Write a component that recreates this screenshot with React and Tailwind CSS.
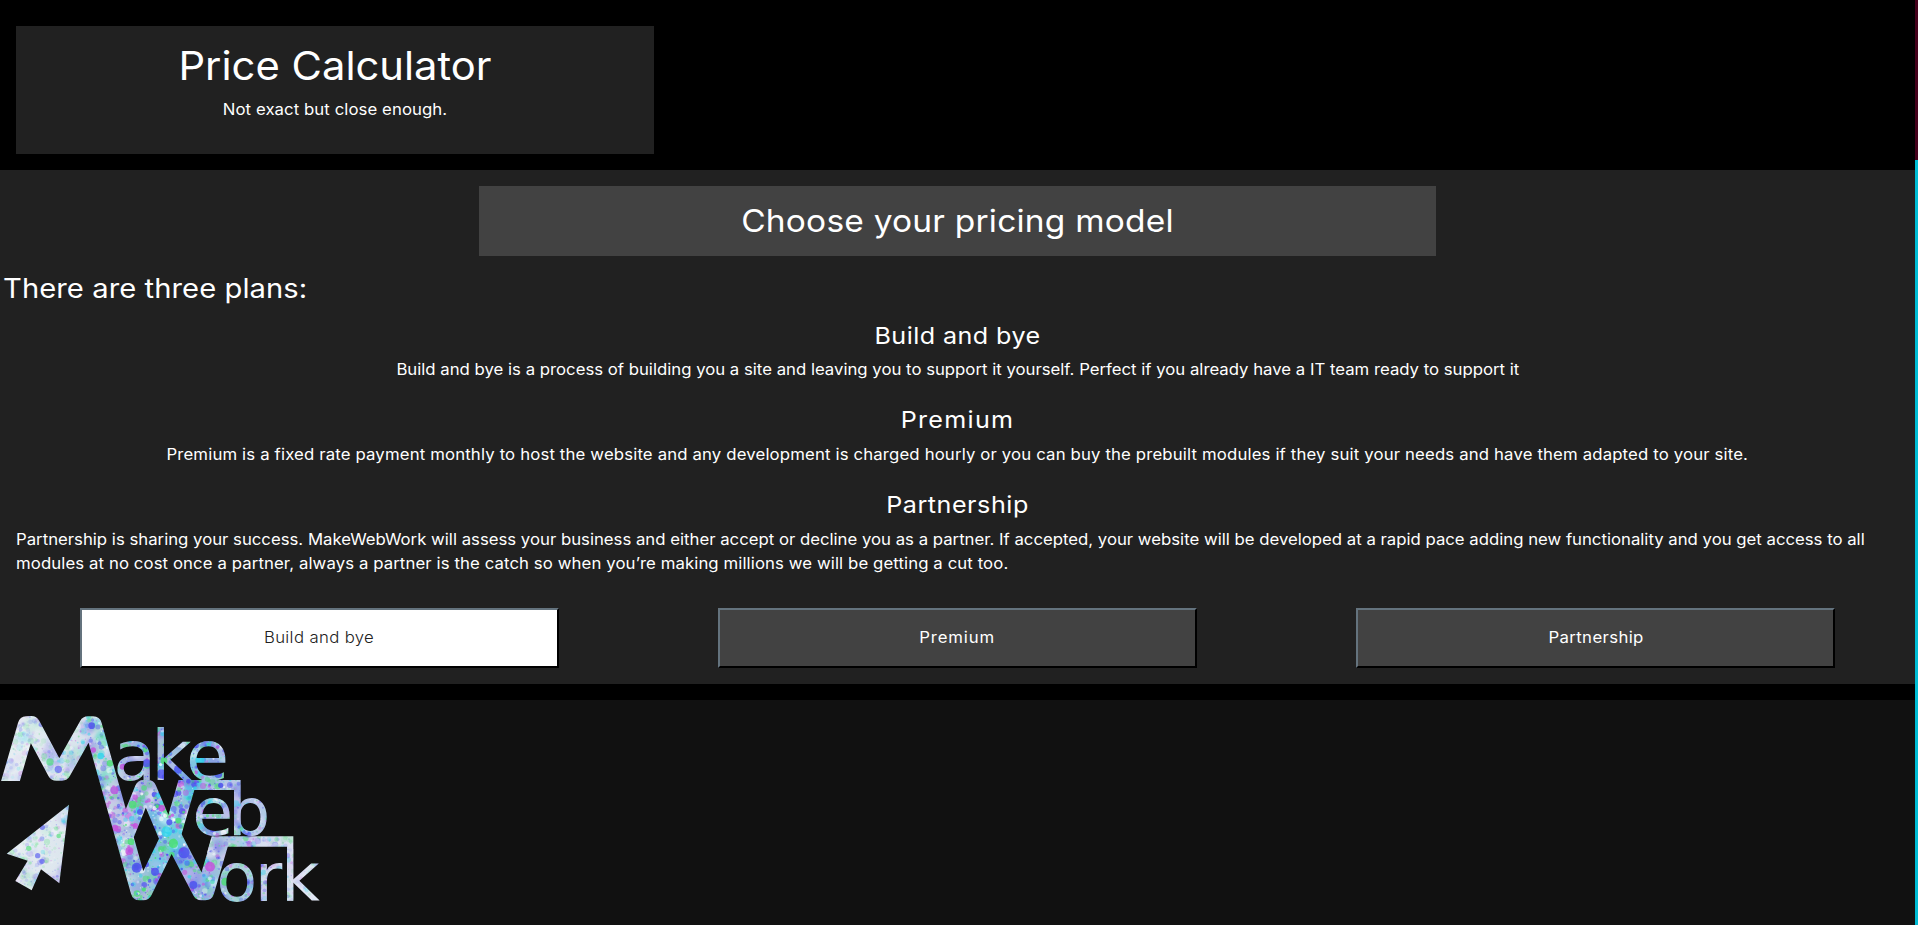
const PLANS = [
  {
    name: "Build and bye",
    heading: "tracking-[0.4px]",
    align: "items-center",
    lines: [
      {
        text: "Build and bye is a process of building you a site and leaving you to support it yourself. Perfect if you already have a IT team ready to support it",
        style: "origin-center tracking-normal",
      },
    ],
    button: "tracking-[0.33px]",
  },
  {
    name: "Premium",
    heading: "tracking-[1.2px]",
    align: "items-center",
    lines: [
      {
        text: "Premium is a fixed rate payment monthly to host the website and any development is charged hourly or you can buy the prebuilt modules if they suit your needs and have them adapted to your site.",
        style: "origin-center tracking-[0.142px]",
      },
    ],
    button: "tracking-[0.8px]",
  },
  {
    name: "Partnership",
    heading: "tracking-[0.5px]",
    align: "items-start",
    lines: [
      {
        text: "Partnership is sharing your success. MakeWebWork will assess your business and either accept or decline you as a partner. If accepted, your website will be developed at a rapid pace adding new functionality and you get access to all",
        style: "origin-left tracking-normal",
      },
      {
        text: "modules at no cost once a partner, always a partner is the catch so when you’re making millions we will be getting a cut too.",
        style: "origin-left tracking-[0.093px]",
      },
    ],
    button: "tracking-[0.35px]",
  },
];

const MAGENTA = "#c64fdc";
const GREEN = "#48e070";
const BLUE = "#4a4cf0";
const CYAN = "#2fd6ec";

// Large paint drops, as [x, y, radius, colour]
const DROPS = [
  [343, 271, 12, MAGENTA], [345, 384, 10, MAGENTA], [388, 453, 12, MAGENTA],
  [175, 208, 11, BLUE], [150, 186, 11, GREEN], [275, 77, 10, BLUE],
  [398, 314, 12, GREEN], [280, 150, 8, MAGENTA], [113, 467, 8, BLUE],
  [127, 382, 8, BLUE], [86, 445, 8, GREEN], [176, 408, 7, GREEN],
  [393, 425, 10, GREEN], [552, 458, 17, BLUE], [662, 256, 8, BLUE],
  [410, 503, 15, BLUE], [630, 500, 15, MAGENTA], [485, 325, 10, MAGENTA],
  [508, 367, 9, BLUE], [580, 555, 12, BLUE], [330, 190, 10, GREEN],
  [302, 168, 10, CYAN], [126, 484, 8, BLUE], [465, 515, 12, BLUE],
  [492, 182, 10, GREEN], [535, 208, 13, BLUE], [484, 222, 14, BLUE],
  [600, 180, 14, CYAN], [655, 222, 12, BLUE], [676, 545, 12, GREEN],
  [520, 430, 14, GREEN], [440, 190, 12, BLUE], [535, 362, 9, GREEN],
  [420, 336, 9, BLUE], [500, 395, 16, CYAN], [368, 200, 9, MAGENTA],
];

// Soft tints below the drops
const TINTS = [
  [500, 400, 90, CYAN, 0.35], [440, 300, 70, "#8f7fe6", 0.35], [600, 200, 70, CYAN, 0.35],
  [400, 160, 60, "#8f8fe8", 0.45], [620, 330, 60, "#5fd8c8", 0.4], [590, 540, 70, "#7686ee", 0.3],
  [420, 470, 70, "#70c8e0", 0.35], [760, 340, 60, "#8fa8ec", 0.35], [700, 540, 60, "#7fe0c0", 0.35],
];

function scatter(seed, count, colours, radius) {
  let state = seed;
  const next = () => {
    state = (state * 16807) % 2147483647;
    return state / 2147483647;
  };
  return Array.from({ length: count }, () => {
    const x = next() * 980;
    const y = 40 + next() * 570;
    const r = radius(next());
    const colour = colours[Math.floor(next() * colours.length)];
    const strength = Math.max(0.25, 0.9 - Math.abs(x - 500) / 600);
    return [x, y, r, colour, strength * (0.3 + next() * 0.7)];
  });
}

const CLOUDS = scatter(911, 500, [CYAN, "#ffffff", "#8f7fe6", "#6fe0a8", "#d9b8f4", "#5f6fe8"], (n) => 10 + n * 16);
const SPECKLES = scatter(4127, 5000, [MAGENTA, GREEN, BLUE, CYAN, BLUE, GREEN, "#ffffff"], (n) => 2 + n ** 3 * 8);

function Drops({ items }) {
  return items.map(([x, y, r, colour, opacity], i) => (
    <circle key={i} cx={x} cy={y} r={r} fill={colour} opacity={opacity} />
  ));
}

function Logo() {
  return (
    <svg className="block h-[225px] w-[340px]" viewBox="0 0 1020 675" role="img" aria-label="Make Web Work">
      <defs>
        <linearGradient id="base" x1="0" x2="1" y1="0" y2="0">
          <stop offset="0" stopColor="#eaf0f3" />
          <stop offset="0.25" stopColor="#d7e2ec" />
          <stop offset="0.42" stopColor="#aac0d8" />
          <stop offset="0.62" stopColor="#a8bfde" />
          <stop offset="0.85" stopColor="#dadff0" />
          <stop offset="1" stopColor="#eef0fa" />
        </linearGradient>
        <filter id="soft" x="-50%" y="-50%" width="200%" height="200%">
          <feGaussianBlur stdDeviation="22" />
        </filter>
        <filter id="cloud">
          <feGaussianBlur stdDeviation="5" />
        </filter>
        <pattern id="paint" patternUnits="userSpaceOnUse" width="1020" height="675">
          <rect width="1020" height="675" fill="url(#base)" />
          <g filter="url(#soft)">
            <Drops items={TINTS} />
          </g>
          <g filter="url(#cloud)" opacity="0.75">
            <Drops items={CLOUDS} />
          </g>
          <Drops items={SPECKLES} />
          <Drops items={DROPS.map(([x, y, r, c]) => [x, y, r, c, x < 260 ? 0.6 : 0.8])} />
        </pattern>
        <clipPath id="trim">
          <path d="M0 0H420V240H1020V675H230V243H0Z" />
        </clipPath>
      </defs>
      <g clipPath="url(#trim)" fill="none" stroke="url(#paint)" strokeWidth="54" strokeLinejoin="round">
        <path d="M23 272 80 76 94 75 169 215 186 215 264 76 279 76 419 574 430 574 514 402 604 574 616 574 660 424" />
        <path d="M372 412 431 267 443 267 510 425 568 225" />
      </g>
      <g fill="url(#paint)">
        <path d="M540 240H722V405H703V270H560Z" />
        <path d="M635 409H880V602H861V440H682L650 460 621 458Z" />
        <path d="M207 314 20 461 83 482 46 543 95 571 123 508 178 550Z" />
        <g fontFamily="'DejaVu Sans', sans-serif">
          <text x="340 454 558" y="240" fontSize="210">ake</text>
          <text x="577 684" y="405" fontSize="200">eb</text>
          <text x="649 764 843" y="602" fontSize="201">ork</text>
        </g>
      </g>
    </svg>
  );
}

export default function App() {
  return (
    <div className="flex h-[925px] w-full overflow-hidden bg-black font-['Inter',sans-serif] text-[15.5px] leading-6 text-white">
      <main className="flex min-w-0 flex-1 flex-col">
        <header className="px-4 pt-[26px] pb-4">
          <div className="w-[638px] bg-[#212121] p-4 text-center">
            <h1 className="mb-2 scale-x-107 text-[39px] leading-[48px]">Price Calculator</h1>
            <p className="mb-4 scale-x-108 tracking-[0.07px]">Not exact but close enough.</p>
          </div>
        </header>

        <section className="h-[514px] bg-[#212121] pt-4">
          <div className="mx-auto w-[957px] bg-[#424242] p-4 text-center">
            <h2 className="scale-x-108 text-[31px] leading-[38px] tracking-[0.2px]">Choose your pricing model</h2>
          </div>
          <h3 className="mt-4 mb-2 ml-[3px] w-fit origin-left scale-x-108 text-[27px] leading-[33.6px] tracking-[0.07px]">
            There are three plans:
          </h3>
          {PLANS.map((plan) => (
            <article key={plan.name} className="px-4 pt-2 pb-4">
              <h4 className={`mb-2 scale-x-108 text-center text-[23.25px] leading-[28.8px] ${plan.heading}`}>
                {plan.name}
              </h4>
              <p className={`flex flex-col whitespace-nowrap ${plan.align}`}>
                {plan.lines.map((line) => (
                  <span key={line.text} className={`scale-x-108 ${line.style}`}>
                    {line.text}
                  </span>
                ))}
              </p>
            </article>
          ))}
          <div className="grid grid-cols-3 justify-items-center pt-4">
            {PLANS.map((plan, i) => (
              <button
                key={plan.name}
                className={`h-[60px] w-3/4 border-2 border-t-[#64737e] border-r-black border-b-black border-l-[#64737e] ${plan.button} ${
                  i === 0 ? "bg-white font-light text-[#212121]" : "bg-[#424242] text-white"
                }`}
              >
                <span className="inline-block scale-x-108">{plan.name}</span>
              </button>
            ))}
          </div>
        </section>

        <footer className="mt-4 flex-1 bg-[#111111]">
          <Logo />
        </footer>
      </main>

      <div className="w-[3px] shrink-0 bg-[#00bcd4]">
        <div className="h-40 bg-[#44001b]" />
      </div>
    </div>
  );
}
